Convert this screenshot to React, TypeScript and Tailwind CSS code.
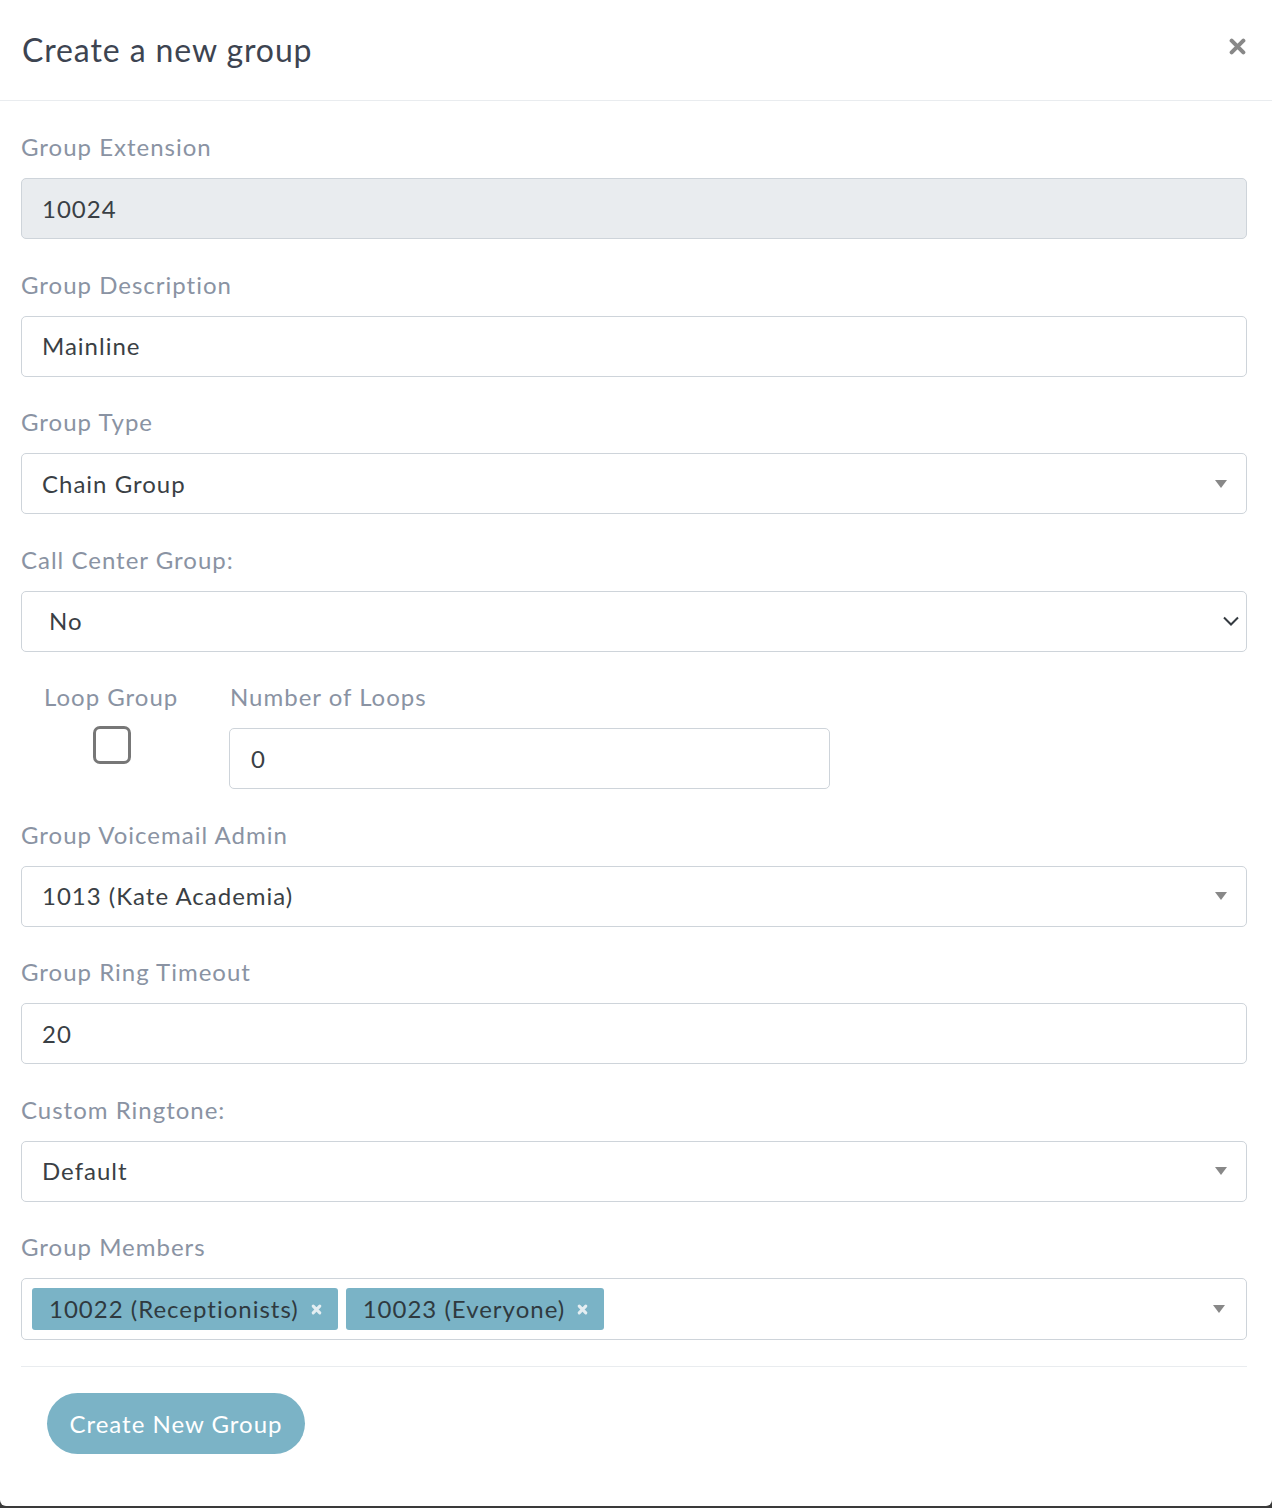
import type { ReactNode } from 'react';

const font = { fontFamily: 'Lato, "Noto Sans", sans-serif', letterSpacing: '1px' };

function CaretDown() {
  return (
    <svg viewBox="0 0 12 8" className="h-[8px] w-[12px]" fill="#888">
      <path d="M0 0h12L6 8z" />
    </svg>
  );
}

function Chevron() {
  return (
    <svg viewBox="0 0 16 10" className="h-[10px] w-[16px]" fill="none" stroke="#343a40" strokeWidth="2">
      <path d="M1 1.5l7 7 7-7" />
    </svg>
  );
}

function CloseIcon() {
  return (
    <svg viewBox="0 0 16 16" className="-mt-[8px] h-[17px] w-[17px]" fill="none" stroke="#888" strokeWidth="3.8" strokeLinecap="round">
      <path d="M2.5 2.5l11 11M13.5 2.5l-11 11" />
    </svg>
  );
}

function Field({ label, children }: { label: string; children: ReactNode }) {
  return (
    <div className="mb-[27.5px]">
      <div className="mb-[13px] flex h-[36px] items-center text-[24px] text-[#8a93a3]">{label}</div>
      {children}
    </div>
  );
}

function Box({
  children,
  disabled = false,
  pad = 'pl-[20px] pr-[19px]',
}: {
  children: ReactNode;
  disabled?: boolean;
  pad?: string;
}) {
  return (
    <div
      className={`flex h-[61px] items-center rounded-[5px] border border-[#ced4da] text-[24px] text-[#3a3f45] ${pad} ${
        disabled ? 'bg-[#e9ecef]' : 'bg-white'
      }`}
    >
      {children}
    </div>
  );
}

function Tag({ text }: { text: string }) {
  return (
    <span className="flex h-[42px] items-center gap-[12px] rounded-[3px] bg-[#7ab3c6] pl-[17px] pr-[16px] text-[24px] text-[#2f3a40]">
      {text}
      <svg viewBox="0 0 10 10" className="h-[11px] w-[11px]" fill="none" stroke="#e4eef2" strokeWidth="2.8" strokeLinecap="round">
        <path d="M2 2l6 6M8 2l-6 6" />
      </svg>
    </span>
  );
}

export default function App() {
  return (
    <div className="min-h-[1508px] bg-[#3a3a3a]" style={font}>
      <div className="h-[1506px] rounded-b-[6px] bg-white">
        <div className="flex h-[101px] items-center justify-between border-b border-[#e9ecef] pl-[22px] pr-[26px]">
          <h1 className="text-[32px] text-[#3d4451]" style={{ letterSpacing: '0.9px' }}>
            Create a new group
          </h1>
          <CloseIcon />
        </div>

        <div className="pl-[21px] pr-[25px] pt-[28px]">
          <Field label="Group Extension">
            <Box disabled>10024</Box>
          </Field>

          <Field label="Group Description">
            <Box>Mainline</Box>
          </Field>

          <Field label="Group Type">
            <Box>
              <span className="flex-1">Chain Group</span>
              <CaretDown />
            </Box>
          </Field>

          <Field label="Call Center Group:">
            <Box pad="pl-[27px] pr-[7px]">
              <span className="flex-1">No</span>
              <Chevron />
            </Box>
          </Field>

          <div className="mb-[27.5px] flex">
            <div className="flex w-[208px] flex-col pl-[23px]">
              <div className="mb-[13px] flex h-[36px] items-center text-[24px] text-[#8a93a3]">Loop Group</div>
              <div className="-mt-[2px] ml-[49px] h-[38px] w-[38px] rounded-[7px] border-[3px] border-[#777]" />
            </div>
            <div className="flex w-[601px] flex-col">
              <div className="mb-[13px] flex h-[36px] items-center pl-[1px] text-[24px] text-[#8a93a3]">Number of Loops</div>
              <Box pad="pl-[21px] pr-[19px]">0</Box>
            </div>
          </div>

          <Field label="Group Voicemail Admin">
            <Box>
              <span className="flex-1">1013 (Kate Academia)</span>
              <CaretDown />
            </Box>
          </Field>

          <Field label="Group Ring Timeout">
            <Box>20</Box>
          </Field>

          <Field label="Custom Ringtone:">
            <Box>
              <span className="flex-1">Default</span>
              <CaretDown />
            </Box>
          </Field>

          <div>
            <div className="mb-[13px] flex h-[36px] items-center text-[24px] text-[#8a93a3]">Group Members</div>
            <div className="flex h-[62px] items-center gap-[8px] rounded-[5px] border border-[#ced4da] pl-[10px] pr-[21px]">
              <Tag text="10022 (Receptionists)" />
              <Tag text="10023 (Everyone)" />
              <span className="flex-1" />
              <CaretDown />
            </div>
          </div>

          <div className="mt-[26px] border-t border-[#e9ecef] pl-[26px] pt-[26px]">
            <button
              type="button"
              className="flex h-[61px] w-[258px] items-center justify-center rounded-full bg-[#7bb3c6] text-[24px] text-white"
            >
              Create New Group
            </button>
          </div>
        </div>
      </div>
    </div>
  );
}
